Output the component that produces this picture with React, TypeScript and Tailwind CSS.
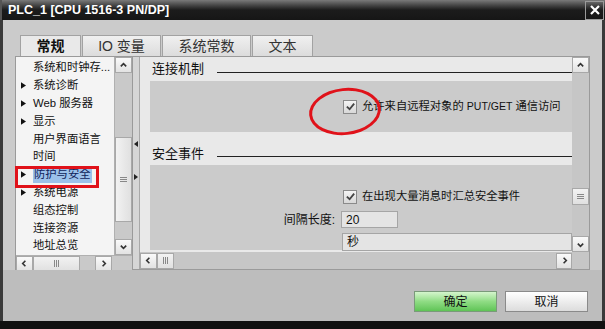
import React from 'react'

const FONT = "font-['Liberation_Sans','Noto_Sans_CJK_SC',sans-serif]"

const TREE = [
  { label: '系统和时钟存...', arrow: false },
  { label: '系统诊断', arrow: true },
  { label: 'Web 服务器', arrow: true },
  { label: '显示', arrow: true },
  { label: '用户界面语言', arrow: false },
  { label: '时间', arrow: false },
  { label: '防护与安全', arrow: true, selected: true },
  { label: '系统电源', arrow: true },
  { label: '组态控制', arrow: false },
  { label: '连接资源', arrow: false },
  { label: '地址总览', arrow: false },
]

const TABS = [
  { label: '常规', w: 'w-[61px]', active: true },
  { label: 'IO 变量', w: 'w-[79px]' },
  { label: '系统常数', w: 'w-[89px]' },
  { label: '文本', w: 'w-[61px]' },
]

function Arrow({ dir }: { dir: 'up' | 'down' | 'left' | 'right' }) {
  const d = {
    up: 'M2 6 L5 3 L8 6',
    down: 'M2 4 L5 7 L8 4',
    left: 'M6 2 L3 5 L6 8',
    right: 'M4 2 L7 5 L4 8',
  }[dir]
  return (
    <svg viewBox="0 0 10 10" className="w-[9px] h-[9px]">
      <path d={d} fill="none" stroke="#333" strokeWidth="1.8" />
    </svg>
  )
}

function SBtn({ dir, className = '' }: { dir: 'up' | 'down' | 'left' | 'right'; className?: string }) {
  return (
    <div className={`flex items-center justify-center bg-gradient-to-b from-[#fafafa] to-[#e2e2e2] border border-[#a8a8a8] ${className}`}>
      <Arrow dir={dir} />
    </div>
  )
}

function Grip({ vertical }: { vertical?: boolean }) {
  return (
    <div className={`flex ${vertical ? 'flex-col' : 'flex-row'} gap-[1px]`}>
      {[0, 1, 2].map(i => (
        <div key={i} className={vertical ? 'w-[7px] h-[1px] bg-[#888]' : 'w-[1px] h-[7px] bg-[#888]'} />
      ))}
    </div>
  )
}

function Check() {
  return (
    <div className="w-[14px] h-[14px] shrink-0 border border-[#8a8a8a] bg-gradient-to-b from-[#f4f4f4] to-[#d8d8d8] flex items-center justify-center">
      <svg viewBox="0 0 12 12" className="w-[11px] h-[11px]">
        <path d="M2 6.2 L5 9 L10 2.8" fill="none" stroke="#444" strokeWidth="2" />
      </svg>
    </div>
  )
}

export default function App() {
  return (
    <div className={`w-[605px] h-[329px] bg-[#111] flex flex-col overflow-hidden relative ${FONT}`}>
      {/* Title bar */}
      <div className="h-[20px] flex items-center bg-gradient-to-b from-[#7a7a7a] via-[#1c1c1c] to-[#161616] border-l-[2px] border-[#555]">
        <div className="flex-1 pl-[6px] text-white font-bold text-[12.5px] leading-none">PLC_1 [CPU 1516-3 PN/DP]</div>
        <div className="w-[19px] h-[19px] border border-[#9a9a9a] flex items-center justify-center mr-[1px]">
          <svg viewBox="0 0 12 12" className="w-[12px] h-[12px]">
            <path d="M2 2 L10 10 M10 2 L2 10" stroke="white" strokeWidth="2.2" />
          </svg>
        </div>
      </div>

      {/* Body */}
      <div className="flex-1 flex flex-col bg-[#cbcbcb] border-l-[3px] border-r-[3px] border-[#3a3a3a]">
        {/* Tabs */}
        <div className="h-[36px] flex items-end pl-[17px] gap-[1px]">
          {TABS.map(t => (
            <div
              key={t.label}
              className={`${t.w} h-[21px] flex items-center justify-center text-[14px] border border-b-0 border-[#a2a2a2] ${
                t.active ? 'bg-[#e9e9e9] font-bold text-[#111]' : 'bg-gradient-to-b from-[#f0f0f0] to-[#dcdcdc] text-[#333]'
              }`}
            >
              {t.label}
            </div>
          ))}
        </div>

        {/* Panel */}
        <div className="ml-[12px] mr-[12px] h-[214px] flex border border-[#9a9a9a] bg-[#c6c6c6]">
          {/* Tree */}
          <div className="w-[117px] flex flex-col border-r border-[#9a9a9a]">
            <div className="flex-1 flex">
              <div className="flex-1 bg-[#f4f4f4] overflow-hidden pt-[2px]">
                {TREE.map(it => (
                  <div key={it.label} className="h-[17.8px] flex items-center text-[11.3px] text-[#111] whitespace-nowrap">
                    <div className="w-[17px] flex justify-start pl-[5px]">
                      {it.arrow && (
                        <svg viewBox="0 0 6 8" className="w-[5px] h-[7px]">
                          <path d="M0 0 L6 4 L0 8 Z" fill="#111" />
                        </svg>
                      )}
                    </div>
                    <span className={it.selected ? 'bg-[#9cc1ea] text-[#10245a] px-[1px]' : ''}>{it.label}</span>
                  </div>
                ))}
              </div>
              <div className="w-[18px] flex flex-col bg-[#c9c9c9] border-l border-[#b0b0b0]">
                <SBtn dir="up" className="h-[16px]" />
                <div className="flex-1 flex flex-col pt-[64px] pb-[11px]">
                  <div className="h-[85px] bg-gradient-to-r from-[#f2f2f2] to-[#e0e0e0] border border-[#a8a8a8] flex items-center justify-center">
                    <Grip vertical />
                  </div>
                </div>
                <SBtn dir="down" className="h-[16px]" />
              </div>
            </div>
            <div className="h-[17px] flex items-center bg-[#c9c9c9] border-t border-[#b0b0b0]">
              <SBtn dir="left" className="w-[17px] h-[16px]" />
              <div className="w-[47px] h-[16px] bg-gradient-to-b from-[#f2f2f2] to-[#e0e0e0] border border-[#a8a8a8] flex items-center justify-center">
                <Grip />
              </div>
              <div className="w-[15px]" />
              <SBtn dir="right" className="w-[17px] h-[16px]" />
            </div>
          </div>

          {/* Splitter */}
          <div className="w-[7px] bg-[#d6d6d6] border-r border-[#a8a8a8] flex flex-col items-center">
            <div className="h-[84px]" />
            <svg viewBox="0 0 4 6" className="w-[4px] h-[6px]"><path d="M4 0 L0 3 L4 6 Z" fill="#222" /></svg>
            <div className="h-[27px]" />
            <svg viewBox="0 0 4 6" className="w-[4px] h-[6px]"><path d="M0 0 L4 3 L0 6 Z" fill="#222" /></svg>
          </div>

          {/* Right content */}
          <div className="flex-1 flex flex-col">
            <div className="flex-1 flex">
              <div className="flex-1 bg-[#e9e9e9] overflow-hidden pl-[12px] text-[#111]">
                <div className="h-[24px] flex items-center gap-[13px]">
                  <span className="text-[13px]">连接机制</span>
                  <div className="flex-1 h-[1px] bg-[#222] mt-[6px]" />
                </div>
                <div className="h-[51px] bg-[#cbcbcb] -ml-[2px] flex items-center pl-[193px] gap-[5px] text-[11.3px] whitespace-nowrap">
                  <Check />
                  <span>允许来自远程对象的 <span className="text-[10.5px]">PUT/GET</span> 通信访问</span>
                </div>
                <div className="h-[33px] flex items-end pb-[2px] gap-[13px]">
                  <span className="text-[13px]">安全事件</span>
                  <div className="flex-1 h-[1px] bg-[#222] mb-[6px]" />
                </div>
                <div className="h-[85px] bg-[#cbcbcb] -ml-[2px] pt-[24px] text-[11.3px] whitespace-nowrap">
                  <div className="flex items-center pl-[193px] gap-[5px] h-[15px]">
                    <Check />
                    <span>在出现大量消息时汇总安全事件</span>
                  </div>
                  <div className="flex items-center mt-[7px] h-[17px]">
                    <span className="w-[191px] text-right pr-[6px] text-[12px]">间隔长度:</span>
                    <div className="w-[57px] h-[17px] bg-[#e4e4e4] border border-[#a5a5a5] flex items-center pl-[4px] text-[12px]">20</div>
                  </div>
                  <div className="flex items-center mt-[5px] pl-[192px]">
                    <div className="flex-1 h-[18px] bg-[#e4e4e4] border border-[#a5a5a5] flex items-center pl-[4px] text-[12px]">秒</div>
                  </div>
                </div>
              </div>
              <div className="w-[17px] flex flex-col bg-[#c6c6c6]">
                <SBtn dir="up" className="h-[16px]" />
                <div className="flex-1 flex flex-col pt-[115px]">
                  <div className="h-[17px] bg-gradient-to-b from-[#f2f2f2] to-[#e0e0e0] border border-[#a8a8a8] flex items-center justify-center">
                    <Grip vertical />
                  </div>
                </div>
                <SBtn dir="down" className="h-[16px]" />
              </div>
            </div>
            <div className="h-[17px] flex items-center bg-[#c6c6c6] pr-[17px]">
              <SBtn dir="left" className="w-[17px] h-[16px]" />
              <div className="w-[17px] h-[16px] bg-gradient-to-b from-[#f2f2f2] to-[#e0e0e0] border border-[#a8a8a8] flex items-center justify-center">
                <Grip />
              </div>
              <div className="flex-1" />
              <SBtn dir="right" className="w-[16px] h-[16px]" />
            </div>
          </div>
        </div>

        {/* Footer */}
        <div className="flex-1 bg-[#bdbdbd] flex justify-end items-start pt-[21px] pr-[14px] gap-[8px]">
          <div className="w-[83px] h-[21px] border border-[#7a9a7a] bg-gradient-to-b from-[#d4f5cc] via-[#8fdc84] to-[#5fc456] flex items-center justify-center text-[12px] text-[#111]">确定</div>
          <div className="w-[83px] h-[21px] border border-[#8a8a8a] bg-gradient-to-b from-[#ffffff] to-[#dcdcdc] flex items-center justify-center text-[12px] text-[#111]">取消</div>
        </div>
      </div>
      <div className="h-[8px] bg-[#111]" />

      {/* Annotation overlays */}
      <div className="absolute left-[15px] top-[166px] w-[84px] h-[22px] border-[3px] border-[#e0121a]" />
      <div className="absolute left-[309px] top-[88px] w-[72px] h-[47px] rounded-[50%] border-[3px] border-[#e0121a] rotate-[-6deg]" />
    </div>
  )
}
